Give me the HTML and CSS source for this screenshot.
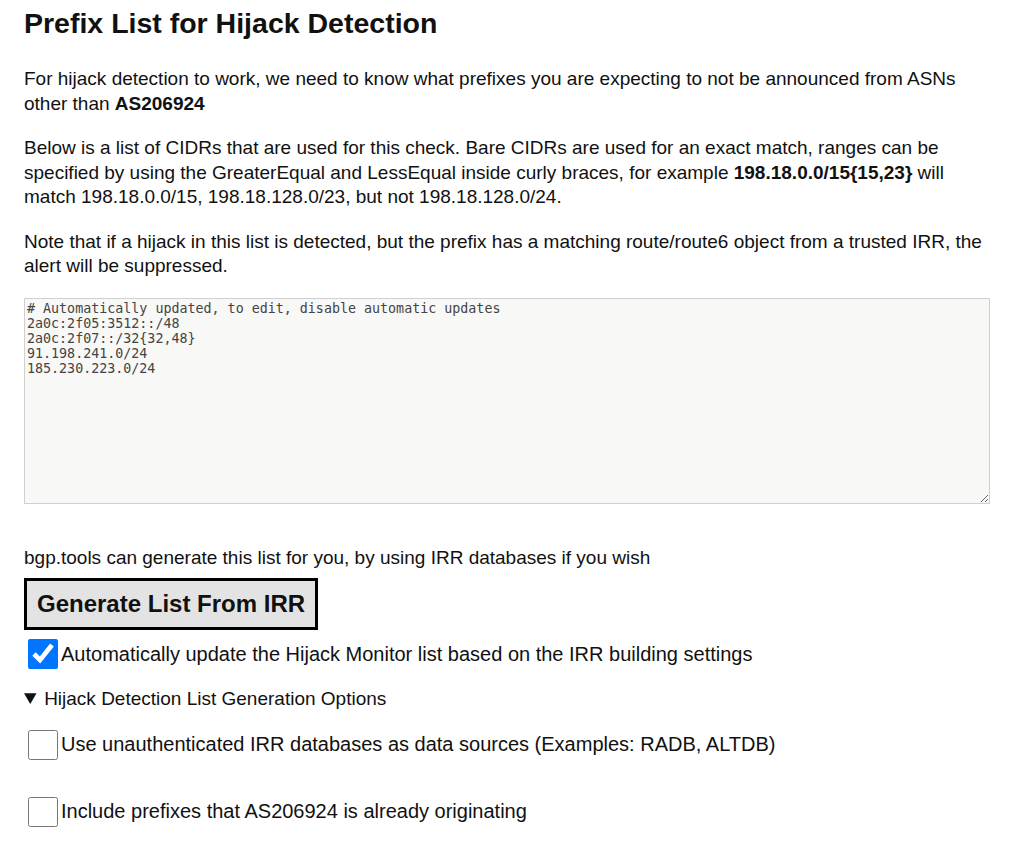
FILE: index.html
```html
<!DOCTYPE html>
<html lang="en">
<head>
  <meta charset="UTF-8">
  <meta name="viewport" content="width=device-width, initial-scale=1.0">
  <title>Prefix List for Hijack Detection</title>
  <link rel="stylesheet" href="styles.css">
</head>
<body>
  <h1>Prefix List for Hijack Detection</h1>

  <p>For hijack detection to work, we need to know what prefixes you are expecting to not be announced from ASNs other than <b>AS206924</b></p>

  <p>Below is a list of CIDRs that are used for this check. Bare CIDRs are used for an exact match, ranges can be specified by using the GreaterEqual and LessEqual inside curly braces, for example <b>198.18.0.0/15{15,23}</b> will match 198.18.0.0/15, 198.18.128.0/23, but not 198.18.128.0/24.</p>

  <p class="last-note">Note that if a hijack in this list is detected, but the prefix has a matching route/route6 object from a trusted IRR, the alert will be suppressed.</p>

  <!-- Lista de prefijos, solo lectura mientras la actualizacion automatica esta activa -->
  <textarea class="prefix-list" id="prefix-list" readonly># Automatically updated, to edit, disable automatic updates
2a0c:2f05:3512::/48
2a0c:2f07::/32{32,48}
91.198.241.0/24
185.230.223.0/24</textarea>

  <p class="irr-note">bgp.tools can generate this list for you, by using IRR databases if you wish</p>
  <button class="generate-button">Generate List From IRR</button>

  <label class="check-row">
    <input type="checkbox" checked>
    <span>Automatically update the Hijack Monitor list based on the IRR building settings</span>
  </label>

  <details class="options" open>
    <summary>Hijack Detection List Generation Options</summary>
    <label class="check-row option">
      <input type="checkbox">
      <span>Use unauthenticated IRR databases as data sources (Examples: RADB, ALTDB)</span>
    </label>
    <label class="check-row option">
      <input type="checkbox">
      <span>Include prefixes that AS206924 is already originating</span>
    </label>
  </details>
</body>
</html>
```

FILE: styles.css
```css
/* Estilos basicos */
body {
  font-family: "Liberation Sans", Arial, sans-serif;
  font-size: 19px;
  line-height: 24.5px;
  color: #111;
  margin: 0 20px 0 24px;
}
h1 {
  font-size: 28.5px;
  margin: 6px 0 27px;
  line-height: 1.2;
}
p {
  margin: 0 0 20px;
}
.last-note {
  margin-bottom: 19px;
}
.prefix-list {
  display: block;
  box-sizing: border-box;
  width: 100%;
  height: 206px;
  margin: 0;
  padding: 2px 2px 2px;
  background-color: #f8f8f6;
  border: 1px solid #d0d0d0;
  color: #444;
  font-family: "DejaVu Sans Mono", monospace;
  font-size: 13.333px;
  line-height: 15px;
  resize: vertical;
}
.irr-note {
  margin: 42px 0 8px;
}
.generate-button {
  display: block;
  font-family: "Liberation Sans", Arial, sans-serif;
  font-size: 24px;
  font-weight: bold;
  line-height: 28px;
  color: #111;
  background-color: #e3e3e3;
  border: 3px solid #000;
  padding: 9px 10px;
  cursor: pointer;
}
.check-row {
  display: flex;
  align-items: center;
  margin-top: 6px;
  font-size: 20px;
}
.check-row input {
  width: 30px;
  height: 30px;
  margin: 3px 3px 3px 4px;
}
.options {
  margin-top: 15px;
}
.options summary {
  cursor: pointer;
}
.option {
  margin-top: 15px;
}
.option + .option {
  margin-top: 31px;
}
```
